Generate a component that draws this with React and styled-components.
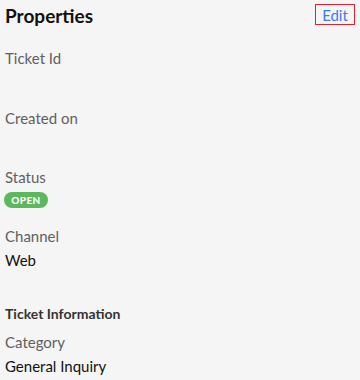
import React from 'react';
import styled, { createGlobalStyle } from 'styled-components';

const GlobalStyle = createGlobalStyle`
	html, body {
		margin: 0;
		padding: 0;
		background: #f5f5f5;
	}
	body {
		font-family: Lato, 'Noto Sans', sans-serif;
	}
`;

const Panel = styled.div`
	width: 360px;
	height: 380px;
	box-sizing: border-box;
	padding: 0 4px;
	overflow: hidden;
	background: #f5f5f5;
`;

const Header = styled.div`
	display: flex;
	justify-content: space-between;
	align-items: flex-start;
	height: 47px;
`;

const Title = styled.h1`
	margin: 4px 0 0 1px;
	font-size: 19px;
	font-weight: 700;
	color: #111;
	line-height: 24px;
`;

const EditButton = styled.button`
	margin: 4px 1px 0 0;
	width: 40px;
	height: 21px;
	padding: 0;
	border: 1px solid #e0202c;
	background: transparent;
	color: #3a7de8;
	font-family: Lato, 'Noto Sans', sans-serif;
	font-size: 15px;
	line-height: 18px;
	cursor: pointer;
`;

const Field = styled.div`
	display: flex;
	flex-direction: column;
	height: ${(p) => p.h}px;
`;

const Label = styled.div`
	margin-left: 1px;
	font-size: 15px;
	line-height: 22px;
	color: #5f5f5f;
`;

const Value = styled.div`
	margin-left: 1px;
	margin-top: 2px;
	font-size: 15px;
	line-height: 22px;
	color: #111;
`;

const Badge = styled.span`
	display: inline-flex;
	align-items: center;
	justify-content: center;
	width: 44px;
	height: 16px;
	margin-top: 4px;
	border-radius: 8px;
	background: #5cb85c;
	color: #fff;
	font-size: 10px;
	font-weight: 900;
	letter-spacing: 0.4px;
`;

const Section = styled.div`
	margin: 0 0 0 1px;
	height: 27px;
	font-size: 14px;
	font-weight: 700;
	line-height: 20px;
	color: #333;
`;

const App = () => {
	return (
		<>
			<GlobalStyle />
			<Panel>
				<Header>
					<Title>Properties</Title>
					<EditButton>Edit</EditButton>
				</Header>
				<Field h={60}>
					<Label>Ticket Id</Label>
				</Field>
				<Field h={59}>
					<Label>Created on</Label>
				</Field>
				<Field h={59}>
					<Label>Status</Label>
					<div>
						<Badge>OPEN</Badge>
					</div>
				</Field>
				<Field h={79}>
					<Label>Channel</Label>
					<Value>Web</Value>
				</Field>
				<Section>Ticket Information</Section>
				<Field h={60}>
					<Label>Category</Label>
					<Value>General Inquiry</Value>
				</Field>
			</Panel>
		</>
	);
};

export default App;
